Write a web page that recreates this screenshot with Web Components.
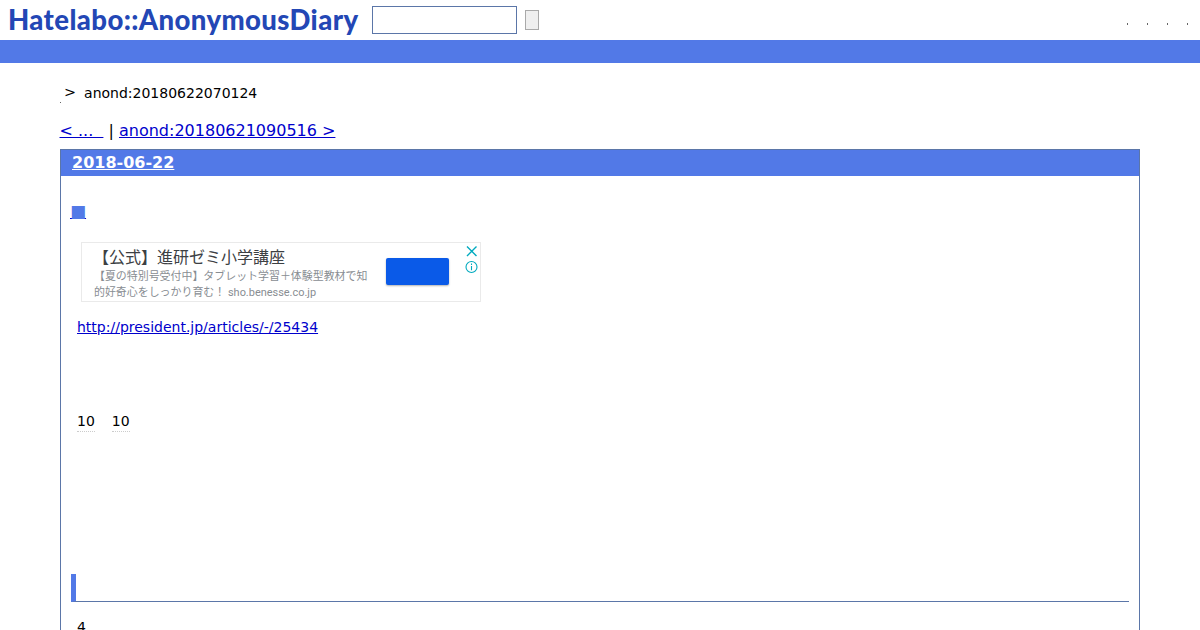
<!DOCTYPE html>
<html lang="ja">
<head>
<meta charset="utf-8">
<title>anond:20180622070124</title>
<style>
  html, body { margin: 0; height: 630px; overflow: hidden; background: #fff; }
  body { font-family: "DejaVu Sans", sans-serif; color: #000; }
</style>
</head>
<body>
<site-header></site-header>
<page-main>
  <day-section date="2018-06-22"></day-section>
</page-main>

<script>
class SiteHeader extends HTMLElement {
  constructor() {
    super();
    this.attachShadow({ mode: 'open' });
    this.shadowRoot.innerHTML = `
      <style>
        :host { display: block; }
        .top { height: 40px; display: flex; align-items: center; padding-left: 8px; }
        .logo {
          font: 900 27.5px/40px "Lato", sans-serif;
          letter-spacing: .4px;
          color: #2347b5;
          width: 364px;
          white-space: nowrap;
          flex: none;
        }
        input {
          box-sizing: border-box;
          width: 145px;
          height: 28px;
          margin: 0 8px 0 0;
          border: 1px solid #5b76a8;
          background: #fff;
          padding: 0;
        }
        button {
          box-sizing: border-box;
          width: 14px;
          height: 20px;
          padding: 0;
          border: 1px solid #a9a9a9;
          border-radius: 0;
          background: #efefef;
        }
        .marks { margin-left: auto; display: flex; gap: 19px; padding: 8px 12px 0 0; }
        .marks i { width: 1px; height: 2px; background: #666; display: block; }
        .bar { height: 23px; background: #5279e7; }
      </style>
      <div class="top">
        <div class="logo">Hatelabo::AnonymousDiary</div>
        <input type="text" aria-label="search">
        <button type="button" aria-label="submit"></button>
        <div class="marks"><i></i><i></i><i></i><i></i></div>
      </div>
      <div class="bar"></div>
    `;
  }
}

class PageMain extends HTMLElement {
  constructor() {
    super();
    this.attachShadow({ mode: 'open' });
    this.shadowRoot.innerHTML = `
      <style>
        :host { display: block; padding: 0 60px; }
        .crumb {
          display: flex;
          align-items: center;
          height: 18px;
          margin-top: 21px;
          font-size: 14px;
          line-height: 18px;
        }
        .crumb i { width: 1px; height: 1px; background: #666; align-self: flex-end; margin: 0 3px -1px 0; }
        .crumb b { font-weight: 400; font-size: 14.4px; margin-right: 8px; position: relative; top: -1px; }
        .pager { margin-top: 19px; height: 20px; font-size: 16px; line-height: 20px; white-space: pre; margin-bottom: 8px; margin-left: -.5px; }
        a { color: #0000cc; }
      </style>
      <div class="crumb"><i></i><b>&gt;</b><span>anond:20180622070124</span></div>
      <div class="pager"><a href="#">&lt; ...  </a> | <a href="#">anond:20180621090516 &gt;</a></div>
      <slot></slot>
    `;
  }
}

class AdBox extends HTMLElement {
  constructor() {
    super();
    this.attachShadow({ mode: 'open' });
    this.shadowRoot.innerHTML = `
      <style>
        :host {
          display: flex;
          box-sizing: border-box;
          width: 400px;
          height: 60px;
          border: 1px solid #eaeaea;
          font-family: "Roboto", "Noto Sans CJK JP", sans-serif;
          position: relative;
        }
        .text { width: 292px; padding: 4px 0 0 12px; flex: none; }
        .title {
          font: 400 16px/21px "Roboto", "Noto Sans CJK JP", sans-serif;
          color: #3c4043;
          margin-left: -1px;
        }
        .desc {
          font: 400 10.95px/15.5px "Roboto", "Noto Sans CJK JP", sans-serif;
          color: #888d92;
          margin-top: 1px;
          white-space: nowrap;
        }
        .cta {
          width: 63px;
          height: 27px;
          margin-top: 15px;
          background: #0a5ae8;
          border-radius: 2px;
          box-shadow: 0 1px 2px rgba(0,0,0,.3);
          flex: none;
        }
        .icons { position: absolute; top: 1px; right: 1px; display: flex; flex-direction: column; }
        svg { display: block; width: 15px; height: 15px; fill: none; stroke: #00aabf; }
      </style>
      <div class="text">
        <div class="title">【公式】進研ゼミ小学講座</div>
        <div class="desc">【夏の特別号受付中】タブレット学習＋体験型教材で知<br>的好奇心をしっかり育む！ sho.benesse.co.jp</div>
      </div>
      <div class="cta"></div>
      <div class="icons">
        <svg viewBox="0 0 15 15" stroke-width="1.4"><path d="M3 2.500l9.500 9.500M12.500 2.500L3 12"/></svg>
        <svg viewBox="0 0 15 15" stroke-width="1.1"><circle cx="7.500" cy="8" r="5.500"/><path d="M7.500 7v4.200M7.500 4.600v1.300"/></svg>
      </div>
    `;
  }
}

class DaySection extends HTMLElement {
  constructor() {
    super();
    this.attachShadow({ mode: 'open' });
    this.shadowRoot.innerHTML = `
      <style>
        :host { display: block; border: 1px solid #5b76a8; height: 700px; box-sizing: border-box; }
        a { color: #0000cc; }
        .head {
          height: 26px;
          background: #5279e7;
          padding-left: 11px;
          font: 700 16px/26px "DejaVu Sans", sans-serif;
        }
        .head a { color: #fff; }
        .body { padding: 0 10px; }
        .mark { margin: 25px 0 0 -1px; height: 21px; font-size: 17px; line-height: 21px; }
        .mark span { color: #5279e7; }
        ad-box { margin: 20px 0 0 10px; }
        p { margin: 0; padding-left: 6px; font-size: 14px; line-height: 18px; }
        .url { margin-top: 16px; }
        .nums { margin-top: 76px; display: flex; gap: 17px; padding-left: 6px; font-size: 14px; line-height: 18px; }
        .nums span { border-bottom: 1px dotted #ccc; padding-bottom: 1px; }
        h3 {
          margin: 142px 0 0;
          height: 28px;
          box-sizing: border-box;
          border-left: 5px solid #5279e7;
          border-bottom: 1px solid #5b76a8;
        }
        .next { margin-top: 16px; }
      </style>
      <div class="head"><a href="#"></a></div>
      <div class="body">
        <div class="mark"><a href="#"><span>■</span></a></div>
        <ad-box></ad-box>
        <p class="url"><a href="#">http://president.jp/articles/-/25434</a></p>
        <div class="nums"><span>10</span><span>10</span></div>
        <h3></h3>
        <p class="next">4</p>
      </div>
    `;
    this.shadowRoot.querySelector('.head a').textContent = this.getAttribute('date');
  }
}

customElements.define('site-header', SiteHeader);
customElements.define('page-main', PageMain);
customElements.define('ad-box', AdBox);
customElements.define('day-section', DaySection);
</script>
</body>
</html>
